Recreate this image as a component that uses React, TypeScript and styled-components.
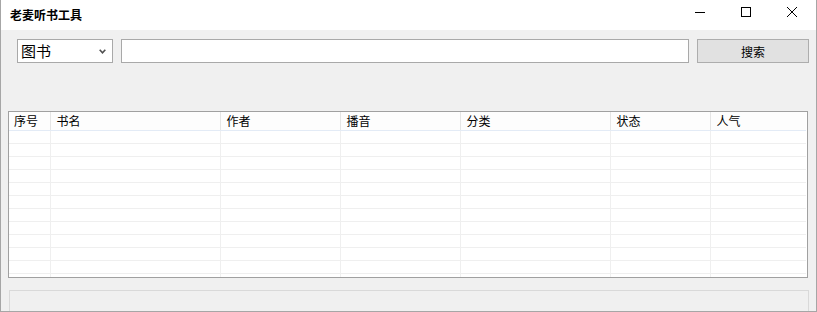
import styled, { createGlobalStyle } from "styled-components";

const GlobalStyle = createGlobalStyle`
  html, body {
    margin: 0;
    padding: 0;
    background: #ffffff;
  }
  * {
    box-sizing: border-box;
  }
`;

const columns = [
  { title: "序号", width: 41 },
  { title: "书名", width: 170 },
  { title: "作者", width: 120 },
  { title: "播音", width: 120 },
  { title: "分类", width: 150 },
  { title: "状态", width: 100 },
  { title: "人气", width: 96 },
];

const rows = Array.from({ length: 12 }, (_, i) => i);

const App = () => {
  return (
    <>
      <GlobalStyle />
      <Window>
        <TitleBar>
          <Title>老麦听书工具</Title>
          <Controls>
            <CtrlButton aria-label="minimize">
              <svg width="10" height="10" viewBox="0 0 10 10">
                <line x1="0" y1="5.5" x2="10" y2="5.5" stroke="#000" strokeWidth="1" />
              </svg>
            </CtrlButton>
            <CtrlButton aria-label="maximize">
              <svg width="10" height="10" viewBox="0 0 10 10">
                <rect x="0.5" y="0.5" width="9" height="9" fill="none" stroke="#000" strokeWidth="1" />
              </svg>
            </CtrlButton>
            <CtrlButton aria-label="close">
              <svg width="10" height="10" viewBox="0 0 10 10">
                <path d="M0 0 L10 10 M10 0 L0 10" stroke="#000" strokeWidth="1" />
              </svg>
            </CtrlButton>
          </Controls>
        </TitleBar>
        <Body>
          <SearchRow>
            <Combo>
              <ComboText>图书</ComboText>
              <svg width="7" height="5" viewBox="0 0 7 5">
                <path d="M0.7 0.7 L3.5 3.8 L6.3 0.7" fill="none" stroke="#505050" strokeWidth="1.6" />
              </svg>
            </Combo>
            <SearchInput />
            <SearchButton>搜索</SearchButton>
          </SearchRow>
          <ListView>
            <Table>
              <colgroup>
                {columns.map((c) => (
                  <col key={c.title} style={{ width: c.width }} />
                ))}
              </colgroup>
              <thead>
                <tr>
                  {columns.map((c, i) => (
                    <HeadCell key={c.title} $first={i === 0}>
                      {c.title}
                    </HeadCell>
                  ))}
                </tr>
              </thead>
              <tbody>
                {rows.map((r) => (
                  <tr key={r}>
                    {columns.map((c) => (
                      <Cell key={c.title} />
                    ))}
                  </tr>
                ))}
              </tbody>
            </Table>
          </ListView>
          <StatusBar />
        </Body>
      </Window>
    </>
  );
};

const Window = styled.div`
  width: 817px;
  height: 312px;
  display: flex;
  flex-direction: column;
  border: 1px solid #a6a6a6;
  border-top: none;
  background: #f0f0f0;
  overflow: hidden;
  font-family: "Noto Sans CJK SC", "Noto Sans", sans-serif;
`;

const TitleBar = styled.div`
  height: 30px;
  flex-shrink: 0;
  background: #ffffff;
  display: flex;
  align-items: center;
  justify-content: space-between;
`;

const Title = styled.div`
  margin-left: 9px;
  font-size: 12px;
  font-weight: bold;
  color: #000;
  line-height: 14px;
  margin-top: -1px;
`;

const Controls = styled.div`
  display: flex;
  align-items: center;
  height: 100%;
  margin-right: 1px;
`;

const CtrlButton = styled.div`
  width: 46px;
  height: 100%;
  display: flex;
  align-items: center;
  justify-content: center;
  padding-bottom: 6px;
  svg {
    display: block;
  }
`;

const Body = styled.div`
  flex: 1;
  display: flex;
  flex-direction: column;
  padding: 9px 7px 0 7px;
`;

const SearchRow = styled.div`
  display: flex;
  align-items: center;
  height: 24px;
  padding-left: 9px;
  gap: 8px;
`;

const Combo = styled.div`
  width: 96px;
  height: 24px;
  background: #fff;
  border: 1px solid #a9a9a9;
  display: flex;
  align-items: center;
  justify-content: space-between;
  padding: 0 6px 0 3px;
  svg {
    display: block;
    margin-top: 1px;
  }
`;

const ComboText = styled.span`
  font-size: 15px;
  line-height: 18px;
  color: #000;
`;

const SearchInput = styled.div`
  width: 568px;
  height: 24px;
  background: #fff;
  border: 1px solid #a9a9a9;
`;

const SearchButton = styled.div`
  width: 112px;
  height: 24px;
  background: #e1e1e1;
  border: 1px solid #adadad;
  display: flex;
  align-items: center;
  justify-content: center;
  font-size: 12px;
  color: #000;
`;

const ListView = styled.div`
  margin-top: 48px;
  width: 800px;
  height: 167px;
  background: #fff;
  border: 1px solid #a0a0a0;
  overflow: hidden;
`;

const Table = styled.table`
  width: 797px;
  border-collapse: collapse;
  table-layout: fixed;
`;

const HeadCell = styled.th<{ $first: boolean }>`
  height: 18px;
  padding: 0 0 0 ${(p) => (p.$first ? 5 : 6)}px;
  text-align: left;
  font-weight: normal;
  font-size: 12px;
  color: #000;
  background: #fdfdfd;
  border-right: 1px solid #e5e5e5;
  border-bottom: 1px solid #e3ebf6;
  line-height: 14px;
  vertical-align: middle;
  &:last-child {
    border-right: none;
  }
`;

const Cell = styled.td`
  height: 13px;
  padding: 0;
  border-right: 1px solid #efefef;
  border-bottom: 1px solid #efefef;
  &:last-child {
    border-right: none;
  }
`;

const StatusBar = styled.div`
  margin-top: 12px;
  margin-left: 1px;
  width: 800px;
  height: 24px;
  border: 1px solid #d9d9d9;
  background: #f0f0f0;
`;

export default App;
